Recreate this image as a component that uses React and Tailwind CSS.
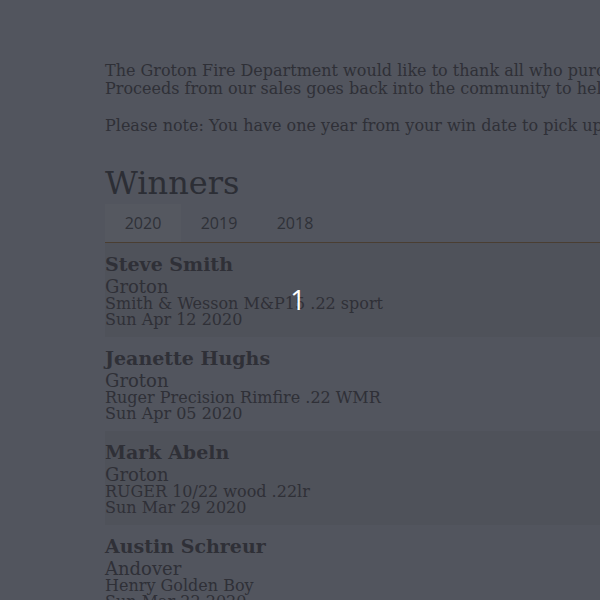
import React from 'react'

const winners = [
  { name: 'Steve Smith', town: 'Groton', prize: 'Smith & Wesson M&P15 .22 sport', date: 'Sun Apr 12 2020' },
  { name: 'Jeanette Hughs', town: 'Groton', prize: 'Ruger Precision Rimfire .22 WMR', date: 'Sun Apr 05 2020' },
  { name: 'Mark Abeln', town: 'Groton', prize: 'RUGER 10/22 wood .22lr', date: 'Sun Mar 29 2020' },
  { name: 'Austin Schreur', town: 'Andover', prize: 'Henry Golden Boy', date: 'Sun Mar 22 2020' },
]

const years = ['2020', '2019', '2018']

export default function App() {
  return (
    <div className="relative w-[600px] h-[600px] overflow-hidden bg-[#52555e] text-[#2f3037] font-['DejaVu_Serif',serif]">
      <div className="w-[900px] pl-[105px] pt-[62px]">
        <p className="text-[16px] leading-[18px] whitespace-nowrap">
          The Groton Fire Department would like to thank all who purchased tickets for our gun raffles.
          <br />
          Proceeds from our sales goes back into the community to help fund equipment and training.
        </p>
        <p className="mt-[19px] text-[16px] leading-[18px] whitespace-nowrap">
          Please note: You have one year from your win date to pick up your prize at the station.
        </p>

        <h2 className="mt-[30px] text-[32px] leading-[37px] text-[#2c2e35]">Winners</h2>

        <div className="mt-[2px] flex border-b border-[#4a3e32] font-['Open_Sans',sans-serif] text-[16px]">
          {years.map((y, i) => (
            <div
              key={y}
              className={
                i === 0
                  ? 'w-[76px] h-[38px] flex items-center justify-center bg-[#555860] text-[#2f3138]'
                  : 'w-[76px] h-[38px] flex items-center justify-center text-[#2f3138]'
              }
            >
              {y}
            </div>
          ))}
        </div>

        <div>
          {winners.map((w, i) => (
            <div
              key={w.name}
              className={i % 2 === 0 ? 'h-[94px] pt-[9px] bg-[#4f525a]' : 'h-[94px] pt-[9px]'}
            >
              <div className="text-[19px] leading-[25px] font-bold">{w.name}</div>
              <div className="text-[18px] leading-[19px]">{w.town}</div>
              <div className="text-[16px] leading-[16px]">{w.prize}</div>
              <div className="text-[16px] leading-[16px]">{w.date}</div>
            </div>
          ))}
        </div>
      </div>

      <div className="absolute inset-0 flex items-center justify-center pointer-events-none">
        <span className="text-white text-[27px] font-['Open_Sans',sans-serif] ml-[-4px]">1</span>
      </div>
    </div>
  )
}
